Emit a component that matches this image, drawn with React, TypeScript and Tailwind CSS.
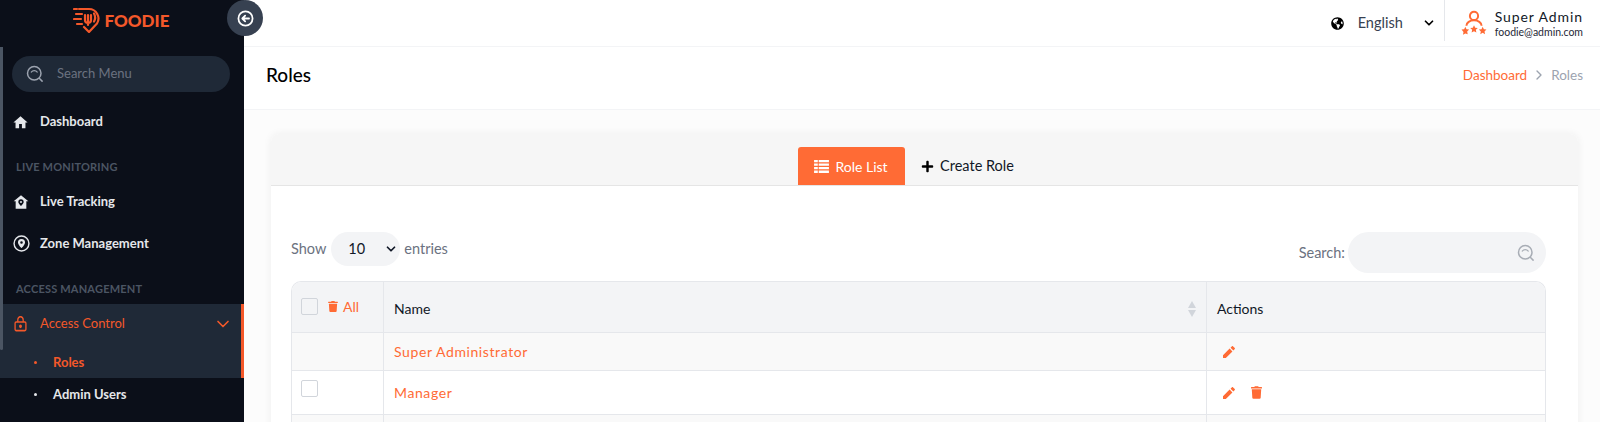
import { FaGlobeAmericas, FaPlus, FaTrash } from "react-icons/fa";
import { MdHome } from "react-icons/md";
import { RiPencilFill } from "react-icons/ri";
import { FiChevronDown, FiChevronRight } from "react-icons/fi";

const font = { fontFamily: '"Lato", "Liberation Sans", sans-serif' };

function SearchGlyph({ className }: { className: string }) {
  return (
    <svg viewBox="0 0 24 24" fill="none" stroke="currentColor" strokeWidth="2" strokeLinecap="round" className={className}>
      <circle cx="11" cy="11" r="9" />
      <path d="M7 9.500a5 5 0 0 1 8 0" strokeWidth="1.600" />
      <path d="M18 18l3.500 3.500" />
    </svg>
  );
}

function Logo() {
  return (
    <div className="flex items-center justify-center gap-[5px] pt-[7px] text-[#f4582a]">
      <svg viewBox="0 0 27 26" className="h-[26px] w-[27px]" fill="none" stroke="currentColor" strokeWidth="2.200" strokeLinecap="round" strokeLinejoin="round">
        <path d="M1 2h3M6 2h10a9.500 9.500 0 0 1 8 14.500L16 25l-5-5" />
        <path d="M3 7h6M1 12h7M4 17h5" />
        <path d="M12 8v5a3 3 0 0 0 6 0V8M15 8v10M21 6.500a8 8 0 0 1 0 8" />
      </svg>
      <span className="text-[17px] font-black leading-none">FOODIE</span>
    </div>
  );
}

function NavItem({ icon, label }: { icon: React.ReactNode; label: string }) {
  return (
    <div className="flex h-[42px] items-center pl-[13px] text-[13px] font-bold text-[#e5e7eb]">
      <span className="flex w-[27px] items-center">{icon}</span>
      {label}
    </div>
  );
}

function SectionLabel({ label }: { label: string }) {
  return <div className="pl-[16px] text-[11px] font-bold tracking-[0.2px] text-[#4b5563]">{label}</div>;
}

function Sidebar() {
  return (
    <aside className="flex w-[244px] shrink-0 flex-col bg-[#0b0f19]">
      <div className="h-[47px] shrink-0 pr-[2px]">
        <Logo />
      </div>
      <div className="ml-[12px] mr-[14px] mt-[9px] flex h-[36px] items-center rounded-full bg-[#1f2937] pl-[14px] text-[13px] text-[#6b7280]">
        <SearchGlyph className="mr-[13px] h-[18px] w-[18px] text-[#9ca3af]" />
        Search Menu
      </div>
      <div className="mt-[9px]">
        <NavItem icon={<MdHome className="-ml-[1px] h-[17px] w-[17px]" />} label="Dashboard" />
      </div>
      <div className="mt-[16px]">
        <SectionLabel label="LIVE MONITORING" />
      </div>
      <div className="mt-[5px]">
        <NavItem
          icon={
            <svg viewBox="0 0 24 24" className="h-[16px] w-[16px]" fill="currentColor">
              <path fillRule="evenodd" d="M12 2 1 11h3v11h16V11h3L12 2Zm0 6a4 4 0 0 1 4 4c0 2.500-4 6-4 6s-4-3.500-4-6a4 4 0 0 1 4-4Zm0 2.500a1.500 1.500 0 1 0 0 3 1.500 1.500 0 0 0 0-3Z" />
            </svg>
          }
          label="Live Tracking"
        />
        <NavItem
          icon={
            <svg viewBox="0 0 24 24" className="h-[17px] w-[17px]" fill="none" stroke="currentColor" strokeWidth="2">
              <circle cx="12" cy="12" r="10.500" />
              <path fill="currentColor" fillRule="evenodd" stroke="none" d="M12 5.500a5 5 0 0 1 5 5c0 3-5 8-5 8s-5-5-5-8a5 5 0 0 1 5-5Zm0 3.200a1.800 1.800 0 1 0 0 3.600 1.800 1.800 0 0 0 0-3.600Z" />
            </svg>
          }
          label="Zone Management"
        />
      </div>
      <div className="mt-[16px]">
        <SectionLabel label="ACCESS MANAGEMENT" />
      </div>
      <div className="mt-[7px] h-[74px] shrink-0 border-r-[3px] border-[#f4582a] bg-[#1f2937]">
        <div className="flex h-[40px] items-center pl-[14px] pr-[8px] text-[13px] text-[#f4582a]">
          <svg viewBox="0 0 24 24" className="mr-[13px] h-[16px] w-[13px]" fill="none" stroke="currentColor" strokeWidth="2.400" preserveAspectRatio="none">
            <rect x="2" y="9" width="20" height="13" rx="2" />
            <path d="M7 9V6a5 5 0 0 1 10 0v3" />
            <circle cx="12" cy="15.500" r="1.500" fill="currentColor" />
          </svg>
          <span className="flex-1">Access Control</span>
          <FiChevronDown className="h-[20px] w-[20px]" strokeWidth={2} />
        </div>
        <div className="mt-[9px] flex items-center pl-[34px] text-[13px] font-bold text-[#f4582a]">
          <span className="mr-[16px] h-[3px] w-[3px] rounded-full bg-current" />
          Roles
        </div>
      </div>
      <div className="mt-[7px] flex items-center pl-[34px] text-[13px] font-bold text-[#e5e7eb]">
        <span className="mr-[16px] h-[3px] w-[3px] rounded-full bg-current" />
        Admin Users
      </div>
    </aside>
  );
}

function Topbar() {
  return (
    <header className="flex h-[47px] shrink-0 items-center justify-end border-b border-[#f3f4f6] pr-[17px]">
      <FaGlobeAmericas className="h-[13px] w-[13px] text-black" />
      <span className="ml-[14px] text-[14.500px] text-[#374151]">English</span>
      <FiChevronDown className="ml-[19px] h-[14px] w-[14px] text-black" strokeWidth={3} />
      <div className="ml-[8px] mr-[16px] h-[41px] self-start border-l border-[#e5e7eb]" />
      <svg viewBox="0 0 24 24" className="mr-[8px] h-[26px] w-[26px] text-[#ff6b35]" fill="none" stroke="currentColor" strokeWidth="1.800">
        <circle cx="12" cy="5.500" r="3.800" />
        <path d="M5 14.500a7 5 0 0 1 14 0" />
        <path fill="currentColor" stroke="none" d="m4 15.500 1.100 2.300 2.400.3-1.800 1.700.5 2.500L4 21.600l-2.200 1.200.5-2.500L.5 18.100l2.400-.3ZM12 14l1.100 2.300 2.400.3-1.800 1.700.5 2.500-2.200-1.200-2.200 1.200.5-2.500-1.800-1.700 2.400-.3ZM20 15.500l1.100 2.300 2.400.3-1.800 1.700.5 2.500-2.200-1.200-2.200 1.200.5-2.500-1.800-1.700 2.400-.3Z" />
      </svg>
      <div className="flex flex-col">
        <span className="text-[14px] leading-[19px] tracking-[0.9px] text-[#111827]">Super Admin</span>
        <span className="text-[10.500px] leading-[13px] text-[#1f2937]">foodie@admin.com</span>
      </div>
    </header>
  );
}

function TitleBand() {
  return (
    <div className="flex h-[63px] shrink-0 items-center justify-between border-b border-[#f3f4f6] pb-[6px] pl-[22px] pr-[17px]">
      <h1 className="text-[19px] font-medium text-black">Roles</h1>
      <div className="flex items-center text-[13.500px]">
        <span className="text-[#ff6b35]">Dashboard</span>
        <FiChevronRight className="mx-[4px] h-[16px] w-[16px] text-[#9ca3af]" />
        <span className="text-[#9ca3af]">Roles</span>
      </div>
    </div>
  );
}

function Tabs() {
  return (
    <div className="flex h-[52px] items-end justify-center rounded-t-[8px] border-b border-[#e5e5e5] bg-[#f6f6f6] pr-[21px]">
      <div className="flex h-[38px] w-[107px] items-center justify-center gap-[6px] rounded-t-[3px] bg-[#ff6b35] text-[14px] text-white">
        <svg viewBox="0 0 16 14" className="h-[13px] w-[15px]" fill="currentColor">
          <path d="M0 0h4v2.400H0ZM5 0h11v2.400H5ZM0 3.800h4v2.400H0ZM5 3.800h11v2.400H5ZM0 7.600h4V10H0ZM5 7.600h11V10H5ZM0 11.400h4V14H0ZM5 11.400h11V14H5Z" />
        </svg>
        Role List
      </div>
      <div className="flex h-[38px] w-[126px] items-center justify-center gap-[6px] text-[14.500px] text-[#111827]">
        <FaPlus className="h-[13px] w-[13px] text-black" />
        Create Role
      </div>
    </div>
  );
}

function Checkbox() {
  return <span className="block h-[17px] w-[17px] rounded-[2px] border border-[#d1d5db] bg-transparent" />;
}

function RolesTable() {
  return (
    <table className="w-full table-fixed border-separate border-spacing-0 overflow-hidden rounded-t-[10px] border-l border-r border-t border-[#e5e7eb] text-[14px]">
      <colgroup>
        <col className="w-[92px]" />
        <col />
        <col className="w-[338px]" />
      </colgroup>
      <thead>
        <tr className="h-[51px] bg-[#f3f4f6] text-left">
          <th className="border-b border-r border-[#e5e7eb] pl-[9px] align-top font-normal">
            <div className="flex items-center pt-[14px] text-[#ff6b35]">
              <Checkbox />
              <FaTrash className="ml-[10px] mr-[5px] h-[11px] w-[10px]" />
              All
            </div>
          </th>
          <th className="border-b border-r border-[#e5e7eb] pl-[10px] pt-[3px] font-normal text-[#111827]">
            <div className="flex items-center justify-between pr-[10px]">
              Name
              <svg viewBox="0 0 8 16" className="h-[16px] w-[8px] fill-[#d1d5db]">
                <path d="M4 0l4 7H0ZM4 16l4-7H0Z" />
              </svg>
            </div>
          </th>
          <th className="border-b border-[#e5e7eb] pl-[10px] pt-[3px] font-normal text-[#111827]">Actions</th>
        </tr>
      </thead>
      <tbody>
        <tr className="h-[38px] bg-[#f9f9f9] text-[#ff6b35]">
          <td className="border-b border-r border-[#e5e7eb]" />
          <td className="border-b border-r border-[#e5e7eb] pl-[10px] tracking-[0.6px]">Super Administrator</td>
          <td className="border-b border-[#e5e7eb] pl-[14px]">
            <RiPencilFill className="h-[16px] w-[16px]" />
          </td>
        </tr>
        <tr className="h-[44px] text-[#ff6b35]">
          <td className="border-b border-r border-[#e5e7eb] pl-[9px] align-top">
            <div className="pt-[9px]">
              <Checkbox />
            </div>
          </td>
          <td className="border-b border-r border-[#e5e7eb] pl-[10px] tracking-[0.6px]">Manager</td>
          <td className="border-b border-[#e5e7eb] pl-[14px]">
            <div className="flex items-center gap-[14px]">
              <RiPencilFill className="h-[16px] w-[16px]" />
              <FaTrash className="h-[13px] w-[11px]" />
            </div>
          </td>
        </tr>
        <tr className="h-[44px] bg-[#f9f9f9]">
          <td className="border-r border-[#e5e7eb]" />
          <td className="border-r border-[#e5e7eb]" />
          <td />
        </tr>
      </tbody>
    </table>
  );
}

export default function App() {
  return (
    <div className="relative flex h-[422px] w-[1600px] overflow-hidden bg-white" style={font}>
      <Sidebar />
      <div className="absolute left-0 top-[47px] h-[303px] w-[3px] rounded-b-[2px] bg-[#4b5563]" />
      <button className="absolute left-[227px] top-0 flex h-[36px] w-[36px] items-center justify-center rounded-full bg-[#374151] text-white">
        <svg viewBox="0 0 24 24" className="h-[17px] w-[17px]" fill="none" stroke="currentColor" strokeWidth="2.500" strokeLinecap="round" strokeLinejoin="round">
          <circle cx="12" cy="12" r="10" />
          <path d="M17 12H8M11.500 8 7.500 12l4 4" />
        </svg>
      </button>
      <main className="flex min-w-0 flex-1 flex-col">
        <Topbar />
        <TitleBand />
        <div className="flex-1 bg-[#fcfcfc] pl-[27px] pr-[22px] pt-[24px]">
          <div className="rounded-[8px] bg-white shadow-[0_0_8px_rgba(0,0,0,0.06)]">
            <Tabs />
            <div className="pl-[20px] pr-[32px] pt-[46px]">
              <div className="mb-[8px] flex items-start justify-between">
                <div className="flex items-center text-[14.500px] text-[#6b7280]">
                  Show
                  <div className="ml-[5px] mr-[4px] flex h-[34px] w-[69px] items-center justify-between rounded-full bg-[#f3f4f6] pl-[17px] pr-[2px] text-[#111827]">
                    10
                    <FiChevronDown className="h-[14px] w-[14px]" strokeWidth={3} />
                  </div>
                  entries
                </div>
                <div className="flex items-center text-[14.500px] text-[#6b7280]">
                  Search:
                  <div className="ml-[3px] flex h-[41px] w-[198px] items-center justify-end rounded-full bg-[#f3f4f6] pr-[11px]">
                    <SearchGlyph className="h-[18px] w-[18px] text-[#a8adb5]" />
                  </div>
                </div>
              </div>
              <RolesTable />
            </div>
          </div>
        </div>
      </main>
    </div>
  );
}
